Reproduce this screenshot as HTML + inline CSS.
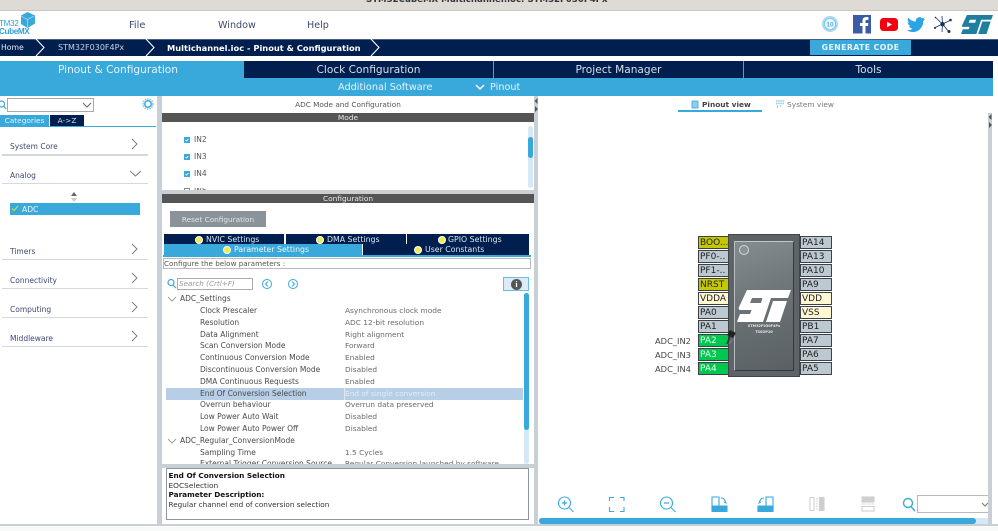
<!DOCTYPE html>
<html><head><meta charset="utf-8"><style>
html,body{margin:0;padding:0;background:#fff}
#p{position:relative;width:998px;height:531px;overflow:hidden;background:#fff;font-family:"DejaVu Sans","Liberation Sans",sans-serif;color:#444;filter:blur(.3px)}
#p div,#p svg{position:absolute}
.t{white-space:nowrap;line-height:12px;height:12px}
.n{background:#001f4f}
.b{background:#39a9dc}
.g{background:#c8d0d6}
.lab{font-size:7.5px;color:#4a4a4a}
.val{font-size:7.4px;color:#6a6a6a}
.cat{font-size:7.5px;color:#3d4a72;left:10px}
.line{left:2px;width:146px;height:1px;background:#d2d8dc}
.pin{width:30px;height:11px;border:1px solid #3c4248;font-size:9px;line-height:13px;padding-left:1px;box-sizing:content-box;color:#222;background:#bcc9d0;overflow:hidden}
.r{width:29px}
.y{background:#c4c800}.c{background:#fff6d2}.gr{background:#00c84e;color:#eafff0}
.adc{font-size:8.3px;color:#444;left:655px}
.dot{width:6px;height:6px;border-radius:50%;background:#ecec50;border:.5px solid #fff}
.tb{color:#dbe6f2;font-size:7.8px;line-height:11px}
.hdr{left:162px;width:372px;height:9px;background:#555;color:#e8e8e8;font-size:7.4px;line-height:10px;text-align:center}
.cb{left:184px;width:6px;height:6px;background:#39a9dc}
.in{left:194px;font-size:7.5px;color:#555}
.nav{font-size:10.6px;color:#d6dfea;text-align:center;top:64px}
</style></head><body><div id="p">
<div style="left:0;top:0;width:998px;height:10px;background:#dedbd6"></div>
<div style="left:0;top:10px;width:998px;height:1px;background:#c9c6c1"></div>
<div class="t" style="left:366px;top:-6px;font-size:8.6px;color:#333;font-weight:bold">STM32CubeMX Multichannel.ioc: STM32F030F4Px</div>

<!-- logo -->
<div class="t" style="left:-1px;top:18px;font-size:8px;color:#2f9fd4;font-family:'Liberation Sans',sans-serif;letter-spacing:-.2px">TM32</div>
<div class="t" style="left:-1px;top:26px;font-size:8.2px;color:#2f9fd4;font-family:'Liberation Sans',sans-serif;font-weight:bold;letter-spacing:-.4px">CubeMX</div>
<svg style="left:20px;top:12px" width="15" height="16" viewBox="0 0 15 16"><path d="M7.500 0L15 3.500V11.500L7.500 16L1 12V3.500Z" fill="#39a9dc"/><path d="M1 4L7.500 7.500L14 4M7.500 7.500V15" stroke="#bfe3f5" stroke-width=".7" fill="none"/></svg>
<div class="t" style="left:129px;top:18px;font-size:9.800px;line-height:12px;color:#3f4a6d;margin-top:1.500px">File</div>
<div class="t" style="left:218px;top:18px;font-size:9.600px;color:#3f4a6d;margin-top:1.500px">Window</div>
<div class="t" style="left:307px;top:18px;font-size:9.600px;color:#3f4a6d;margin-top:1.500px">Help</div>

<!-- social icons -->
<svg style="left:821px;top:15px" width="18" height="18" viewBox="0 0 18 18"><circle cx="9" cy="9" r="8" fill="#a9d9f1"/><circle cx="9" cy="9" r="5.600" fill="#e9f6fc" stroke="#7cc4e8" stroke-width=".8"/><text x="9" y="11.500" font-size="6.500" font-weight="bold" text-anchor="middle" fill="#5ab0dc" font-family="Liberation Sans">10</text></svg>
<svg style="left:853px;top:15px" width="19" height="19" viewBox="0 0 19 19"><rect width="18" height="18.500" fill="#3b5ba5"/><path d="M12.500 18.500V11H15L15.400 8H12.500V6.300C12.500 5.400 12.800 4.900 14 4.900H15.500V2.200C15 2.100 14.200 2 13.300 2C11 2 9.500 3.400 9.500 5.800V8H7V11H9.500V18.500Z" fill="#fff"/></svg>
<svg style="left:880px;top:18px" width="18" height="13" viewBox="0 0 18 13"><rect width="18" height="13" rx="3.400" fill="#f2000f"/><path d="M7 3.800L12 6.500L7 9.200Z" fill="#fff"/></svg>
<svg style="left:907px;top:17px" width="18" height="15" viewBox="0 0 18 15"><path d="M18 1.800c-.7.3-1.400.5-2.100.6.8-.5 1.300-1.200 1.600-2-.7.4-1.500.7-2.300.9A3.700 3.700 0 0 0 8.900 4.600C5.900 4.500 3.200 3 1.300.8c-1 1.700-.5 3.900 1.100 4.900-.6 0-1.200-.2-1.700-.5 0 1.800 1.300 3.300 3 3.700-.5.100-1.100.2-1.700.1.500 1.500 1.900 2.500 3.500 2.600C3.900 12.800 2 13.400 0 13.200 1.700 14.300 3.600 15 5.700 15c6.900 0 10.700-5.700 10.500-10.900.7-.6 1.300-1.300 1.800-2.300z" fill="#2ba3e4"/></svg>
<svg style="left:933px;top:15px" width="20" height="19" viewBox="0 0 20 19"><g stroke="#16305f" stroke-width=".8"><path d="M9.500 9L2 2M9.500 9L9 1M9.500 9L18 5M9.500 9L16 17M9.500 9L1 13M9.500 9L9 17"/></g><circle cx="9.500" cy="9.200" r="2.200" fill="#16305f"/><g fill="#16305f"><circle cx="17.500" cy="5" r="1.300"/><circle cx="16" cy="16.500" r="1.500"/><circle cx="2" cy="13" r="1"/><circle cx="2.500" cy="2.500" r=".8"/></g></svg>
<svg style="left:961px;top:15px" width="32" height="19" viewBox="0 0 54 32"><path d="M10 0H54L51 8H34L26 32H18L25.500 8H15L13 13H25Q28 13 27 16L21 32H0L3 24H13L14.500 20H3Q1 20 2 17Z" fill="#1f7f9f"/><path d="M36 11H50L43 32H29Z" fill="#1f7f9f"/></svg>

<!-- breadcrumb -->
<div class="n" style="left:0;top:39px;width:998px;height:17px;border-top:1px solid #4a5d82;box-sizing:border-box"></div>
<div class="t" style="left:1px;top:42px;font-size:7.700px;color:#e4eaf2">Home</div>
<div class="t" style="left:58px;top:42px;font-size:8px;color:#c6d2e2">STM32F030F4Px</div>
<div class="t" style="left:167px;top:42px;font-size:8.300px;color:#fff;font-weight:bold">Multichannel.ioc - Pinout &amp; Configuration</div>
<svg style="left:30px;top:38px" width="360" height="18" viewBox="0 0 360 18"><g fill="none" stroke="#fff" stroke-width="1.100"><path d="M6 1L14 9.500L6 18"/><path d="M116 1L124 9.500L116 18"/><path d="M341 1L349 9.500L341 18"/></g></svg>
<div class="b" style="left:810px;top:40px;width:101px;height:15px;color:#e8f5fc;font-size:7.800px;font-weight:bold;text-align:center;line-height:15px;letter-spacing:.4px">GENERATE CODE</div>

<!-- tabs -->
<div class="b" style="left:0;top:61px;width:993px;height:35px"></div>
<div class="n" style="left:244px;top:61px;width:249px;height:17px"></div>
<div class="n" style="left:494px;top:61px;width:249px;height:17px"></div>
<div class="n" style="left:744px;top:61px;width:249px;height:17px"></div>
<div class="t nav" style="left:0;width:236px;color:#e4f3fb">Pinout &amp; Configuration</div>
<div class="t nav" style="left:244px;width:249px">Clock Configuration</div>
<div class="t nav" style="left:494px;width:249px">Project Manager</div>
<div class="t nav" style="left:744px;width:249px">Tools</div>
<div class="t" style="left:338px;top:82px;font-size:9.700px;color:#e4f3fb">Additional Software</div>
<svg style="left:475px;top:84px" width="10" height="7" viewBox="0 0 10 7"><path d="M1 1L5 5L9 1" fill="none" stroke="#fff" stroke-width="1.500"/></svg>
<div class="t" style="left:490px;top:82px;font-size:9.700px;color:#e4f3fb">Pinout</div>

<!-- splitters -->
<div class="g" style="left:157px;top:96px;width:5px;height:428px"></div>
<div class="g" style="left:534px;top:96px;width:4px;height:428px"></div>
<div class="g" style="left:0;top:524px;width:998px;height:2px"></div>
<div style="left:0;top:526px;width:998px;height:5px;background:#f8f9f9"></div>
<div class="g" style="left:988px;top:113px;width:4px;height:411px"></div>
<svg style="left:534px;top:97px" width="5" height="16" viewBox="0 0 5 16"><path d="M3.500 1L.5 4L3.500 7ZM1 9L4 12L1 15Z" fill="#555"/></svg>
<svg style="left:988px;top:113px" width="5" height="16" viewBox="0 0 5 16"><path d="M3.500 1L.5 4L3.500 7ZM1 9L4 12L1 15Z" fill="#555"/></svg>

<!-- left panel -->
<svg style="left:0;top:100px" width="7" height="10" viewBox="0 0 7 10"><circle cx="1.500" cy="4" r="3" fill="none" stroke="#39a9dc" stroke-width="1.200"/><path d="M3.500 6L6 9" stroke="#39a9dc" stroke-width="1.200"/></svg>
<div style="left:7px;top:98px;width:87px;height:14px;border:1px solid #a9a9a9;box-sizing:border-box;background:#fff"></div>
<svg style="left:82px;top:102px" width="10" height="6" viewBox="0 0 10 6"><path d="M1 1L5 5L9 1" fill="none" stroke="#666"/></svg>
<svg style="left:142px;top:98px" width="12" height="12" viewBox="0 0 12 12"><circle cx="6" cy="6" r="3.200" fill="none" stroke="#39a9dc" stroke-width="1.500"/><circle cx="6" cy="6" r="5" fill="none" stroke="#7cc4e8" stroke-width="1.500" stroke-dasharray="1.500 1"/></svg>
<div class="b t" style="left:0;top:115px;width:49px;height:11px;color:#e4f3fb;font-size:7.400px;line-height:11px;text-align:center">Categories</div>
<div class="n t" style="left:50px;top:115px;width:34px;height:11px;color:#d6dfea;font-size:7.400px;line-height:11px;text-align:center">A-&gt;Z</div>
<div class="b" style="left:0;top:126px;width:156px;height:1px"></div>

<div class="t cat" style="top:140.500px">System Core</div><div class="line" style="top:154px;height:2px"></div>
<div class="t cat" style="top:169.500px">Analog</div><div class="line" style="top:183px"></div>
<div class="t cat" style="top:245.500px">Timers</div><div class="line" style="top:259px"></div>
<div class="t cat" style="top:274.500px">Connectivity</div><div class="line" style="top:288px"></div>
<div class="t cat" style="top:303.500px">Computing</div><div class="line" style="top:317px"></div>
<div class="t cat" style="top:332.500px">Middleware</div><div class="line" style="top:346px"></div>
<svg style="left:130px;top:138px" width="12" height="205" viewBox="0 0 12 205"><g fill="none" stroke="#777" stroke-width=".9"><path d="M2 1L7 6L2 11"/><path d="M0 33L5.500 38L11 33"/><path d="M2 106L7 111L2 116"/><path d="M2 135L7 140L2 145"/><path d="M2 164L7 169L2 174"/><path d="M2 193L7 198L2 203"/></g></svg>
<svg style="left:70px;top:192px" width="8" height="11" viewBox="0 0 8 11"><path d="M4 0L7 4H1Z" fill="#666"/><path d="M4 10L7 6H1Z" fill="#ccc"/></svg>
<div class="b" style="left:10px;top:203px;width:130px;height:12px"></div>
<svg style="left:11px;top:205px" width="8" height="7" viewBox="0 0 8 7"><path d="M1 3.500L3 5.500L7 1" fill="none" stroke="#c6dc2c" stroke-width="1.200"/></svg>
<div class="t" style="left:22px;top:203.500px;font-size:7.600px;color:#eef8fd">ADC</div>

<!-- middle -->
<div class="t" style="left:162px;width:372px;top:99px;text-align:center;font-size:7.300px;color:#555">ADC Mode and Configuration</div>
<div class="hdr" style="top:113px">Mode</div>
<div style="left:528px;top:126px;width:5px;height:62px;background:#d4e8f5;border-radius:3px"></div>
<div class="b" style="left:528px;top:137px;width:5px;height:21px;border-radius:3px"></div>
<svg style="left:184px;top:137px" width="6" height="40" viewBox="0 0 6 40"><g fill="#39a9dc"><rect width="6" height="6"/><rect y="17" width="6" height="6"/><rect y="34" width="6" height="6"/></g><path d="M1.500 3L2.500 4L4.500 2M1.500 20L2.500 21L4.500 19M1.500 37L2.500 38L4.500 36" stroke="#fff" stroke-width=".8" fill="none"/></svg>
<div class="t in" style="top:134px">IN2</div>
<div class="t in" style="top:151px">IN3</div>
<div class="t in" style="top:168px">IN4</div>
<div style="left:162px;top:188px;width:372px;height:2px;overflow:hidden;background:#fff"><div class="t in" style="left:32px;top:-3px">IN5</div><div style="left:22px;top:0;width:6px;height:6px;border:1px solid #888;box-sizing:border-box"></div></div>
<div class="g" style="left:162px;top:190px;width:372px;height:4px"></div>
<div class="hdr" style="top:194px">Configuration</div>
<div style="left:170px;top:211px;width:96px;height:16px;background:#8a939a;color:#e4e6e8;font-size:7.300px;line-height:17px;text-align:center">Reset Configuration</div>

<div class="n" style="left:164px;top:234px;width:120px;height:10px"></div>
<div class="n" style="left:286px;top:234px;width:120px;height:10px"></div>
<div class="n" style="left:407px;top:234px;width:122px;height:10px"></div>
<div class="b" style="left:164px;top:244px;width:198px;height:11px"></div>
<div class="n" style="left:363px;top:244px;width:166px;height:11px"></div>
<div class="t tb" style="left:206px;top:234px">NVIC Settings</div>
<div class="t tb" style="left:327px;top:234px">DMA Settings</div>
<div class="t tb" style="left:448px;top:234px">GPIO Settings</div>
<div class="t tb" style="left:234px;top:244px;color:#eef8fd">Parameter Settings</div>
<div class="t tb" style="left:425px;top:244px">User Constants</div>
<div class="dot" style="left:195px;top:236px"></div><div class="dot" style="left:316px;top:236px"></div><div class="dot" style="left:438px;top:236px"></div><div class="dot" style="left:223px;top:246px"></div><div class="dot" style="left:414px;top:246px"></div>
<div class="b" style="left:163px;top:255px;width:368px;height:2px"></div>
<div class="t" style="left:163px;top:258px;width:368px;height:11px;border:1px solid #bbb;box-sizing:border-box;font-size:7.200px;line-height:10px;color:#555;background:#fff">Configure the below parameters :</div>

<svg style="left:167px;top:278px" width="10" height="11" viewBox="0 0 10 11"><circle cx="4" cy="4.500" r="3" fill="none" stroke="#39a9dc" stroke-width="1.200"/><path d="M6 7L9 10" stroke="#39a9dc" stroke-width="1.200"/></svg>
<div style="left:177px;top:278px;width:76px;height:12px;border:1px solid #aaa;box-sizing:border-box;font-size:7.200px;line-height:10px;color:#999;font-style:italic;padding-left:1px;white-space:nowrap">Search (Crtl+F)</div>
<svg style="left:261px;top:278px" width="48" height="12" viewBox="0 0 48 12"><g fill="none" stroke="#39a9dc"><circle cx="6" cy="6" r="4.500"/><path d="M7 3.500L4.500 6L7 8.500"/><circle cx="32" cy="6" r="4.500"/><path d="M31 3.500L33.500 6L31 8.500"/></g></svg>
<div style="left:503px;top:277px;width:26px;height:14px;background:#dcebf5;border:1px solid #6cbce6;box-sizing:border-box"></div>
<div style="left:511px;top:279px;width:11px;height:11px;border-radius:50%;background:#555;color:#fff;font:bold 8px/11px 'Liberation Serif',serif;text-align:center">i</div>

<!-- tree -->
<div style="left:166px;top:388px;width:357px;height:11.500px;background:#b6cee6"></div>
<div style="left:344px;top:388px;width:1px;height:11.500px;background:#dfe9f3"></div>
<svg style="left:167px;top:296px" width="12" height="150" viewBox="0 0 12 150"><g fill="none" stroke="#888" stroke-width=".8"><path d="M1 1L5 5L9 1"/><path d="M1 143L5 147L9 143"/></g></svg>
<div class="t lab" style="left:180px;top:292.800px">ADC_Settings</div>
<div class="t lab" style="left:200px;top:305px">Clock Prescaler</div><div class="t val" style="left:345px;top:305px">Asynchronous clock mode</div>
<div class="t lab" style="left:200px;top:316.800px">Resolution</div><div class="t val" style="left:345px;top:316.800px">ADC 12-bit resolution</div>
<div class="t lab" style="left:200px;top:328.600px">Data Alignment</div><div class="t val" style="left:345px;top:328.600px">Right alignment</div>
<div class="t lab" style="left:200px;top:340.400px">Scan Conversion Mode</div><div class="t val" style="left:345px;top:340.400px">Forward</div>
<div class="t lab" style="left:200px;top:352.200px">Continuous Conversion Mode</div><div class="t val" style="left:345px;top:352.200px">Enabled</div>
<div class="t lab" style="left:200px;top:364px">Discontinuous Conversion Mode</div><div class="t val" style="left:345px;top:364px">Disabled</div>
<div class="t lab" style="left:200px;top:375.800px">DMA Continuous Requests</div><div class="t val" style="left:345px;top:375.800px">Enabled</div>
<div class="t lab" style="left:200px;top:387.600px">End Of Conversion Selection</div><div class="t val" style="left:345px;top:387.600px;color:#e4edf6">End of single conversion</div>
<div class="t lab" style="left:200px;top:399.400px">Overrun behaviour</div><div class="t val" style="left:345px;top:399.400px">Overrun data preserved</div>
<div class="t lab" style="left:200px;top:411.200px">Low Power Auto Wait</div><div class="t val" style="left:345px;top:411.200px">Disabled</div>
<div class="t lab" style="left:200px;top:423px">Low Power Auto Power Off</div><div class="t val" style="left:345px;top:423px">Disabled</div>
<div class="t lab" style="left:180px;top:434.800px">ADC_Regular_ConversionMode</div>
<div class="t lab" style="left:200px;top:446.600px">Sampling Time</div><div class="t val" style="left:345px;top:446.600px">1.5 Cycles</div>
<div class="t lab" style="left:200px;top:458.400px">External Trigger Conversion Source</div><div class="t val" style="left:345px;top:458.400px">Regular Conversion launched by software</div>
<div style="left:524px;top:293px;width:5px;height:171px;background:#d4e8f5;border-radius:3px"></div>
<div class="b" style="left:524px;top:293px;width:5px;height:137px;border-radius:3px"></div>
<div class="g" style="left:162px;top:464px;width:372px;height:4px"></div>
<div style="left:162px;top:468px;width:372px;height:56px;background:#fff"></div>
<div style="left:166px;top:468px;width:363px;height:52px;border:1px solid #8e979d;box-sizing:border-box;background:#fff"></div>
<div class="t" style="left:168.500px;top:470px;font-size:7.300px;color:#111;font-weight:bold">End Of Conversion Selection</div>
<div class="t" style="left:168.500px;top:479.500px;font-size:7.400px;color:#333">EOCSelection</div>
<div class="t" style="left:168.500px;top:489px;font-size:7.300px;color:#111;font-weight:bold">Parameter Description:</div>
<div class="t" style="left:168.500px;top:499px;font-size:7.250px;color:#333">Regular channel end of conversion selection</div>

<!-- right head -->
<svg style="left:691px;top:100px" width="8" height="9" viewBox="0 0 8 9"><rect x="1" y="1" width="6" height="7" fill="#8ecdee" stroke="#39a9dc" stroke-width=".8"/></svg>
<div class="t" style="left:702px;top:99px;font-size:7.400px;color:#444;font-weight:bold">Pinout view</div>
<div class="b" style="left:678px;top:110px;width:84px;height:1.500px"></div>
<svg style="left:776px;top:100px" width="8" height="8" viewBox="0 0 8 8"><path d="M0 1H8M0 3.500H8M1 6H2M4 6H5M1 7.500H2" stroke="#8ecdee" stroke-width="1.500" stroke-dasharray="1.500 .7"/></svg>
<div class="t" style="left:787px;top:99px;font-size:7.400px;color:#777">System view</div>

<!-- chip pins -->
<div class="pin y" style="left:698px;top:236px">BOO...</div>
<div class="pin" style="left:698px;top:250px">PF0-..</div>
<div class="pin" style="left:698px;top:264px">PF1-..</div>
<div class="pin y" style="left:698px;top:278px">NRST</div>
<div class="pin c" style="left:698px;top:292px">VDDA</div>
<div class="pin" style="left:698px;top:306px">PA0</div>
<div class="pin" style="left:698px;top:320px">PA1</div>
<div class="pin gr" style="left:698px;top:334px">PA2</div>
<div class="pin gr" style="left:698px;top:348px">PA3</div>
<div class="pin gr" style="left:698px;top:362px">PA4</div>
<div class="pin r" style="left:800px;top:236px">PA14</div>
<div class="pin r" style="left:800px;top:250px">PA13</div>
<div class="pin r" style="left:800px;top:264px">PA10</div>
<div class="pin r" style="left:800px;top:278px">PA9</div>
<div class="pin r c" style="left:800px;top:292px">VDD</div>
<div class="pin r c" style="left:800px;top:306px">VSS</div>
<div class="pin r" style="left:800px;top:320px">PB1</div>
<div class="pin r" style="left:800px;top:334px">PA7</div>
<div class="pin r" style="left:800px;top:348px">PA6</div>
<div class="pin r" style="left:800px;top:362px">PA5</div>
<div class="t adc" style="top:335px">ADC_IN2</div>
<div class="t adc" style="top:349px">ADC_IN3</div>
<div class="t adc" style="top:363px">ADC_IN4</div>

<!-- chip body -->
<div style="left:728px;top:234px;width:72px;height:143px;background:#5d6367;border:1px solid #3f4549;box-sizing:border-box"></div>
<div style="left:734px;top:241px;width:60px;height:130px;background:linear-gradient(160deg,#858c8f 0%,#686f73 55%,#5a6064 100%);border-top:1px solid #c0c5c7;border-left:1px solid #b8bdc0;border-right:1px solid #34393c;border-bottom:1px solid #34393c;box-sizing:border-box"></div>
<div style="left:739px;top:245px;width:10px;height:10px;border-radius:50%;background:#8b9296;border:1px solid #d3d7d9;box-sizing:border-box"></div>
<svg style="left:737px;top:290px" width="54" height="32" viewBox="0 0 54 32"><path d="M10 0H54L51 8H34L26 32H18L25.500 8H15L13 13H25Q28 13 27 16L21 32H0L3 24H13L14.500 20H3Q1 20 2 17Z" fill="#fff"/><path d="M36 11H50L43 32H29Z" fill="#fff"/></svg>
<div class="t" style="left:728px;width:72px;text-align:center;top:320px;font-size:3.500px;color:#e6e8ea;font-weight:bold">STM32F030F4Px</div>
<div class="t" style="left:728px;width:72px;text-align:center;top:326px;font-size:3.500px;color:#e6e8ea;font-weight:bold">TSSOP20</div>
<svg style="left:723px;top:329px" width="14" height="18" viewBox="0 0 14 18"><path d="M4 15L7 7" stroke="#333" stroke-width="1.500"/><path d="M7 1L13 4L10 9L4 6Z" fill="#222"/><path d="M6 15L10 10" stroke="#888" stroke-width="2" opacity=".5"/></svg>

<!-- bottom tools -->
<svg style="left:556px;top:495px" width="400" height="22" viewBox="0 0 400 22" fill="none" stroke="#39a9dc" stroke-width="1.100">
<circle cx="8.500" cy="8" r="6"/><path d="M13 12.500L17.500 17" stroke-width="1"/><path d="M6 8H11M8.500 5.500V10.500" stroke-width="1.200"/>
<path d="M53.500 6V2.500H58M64 2.500H68V6M68 12V16.500H64M58 16.500H53.500V12"/>
<circle cx="110.500" cy="8" r="6"/><path d="M115 12.500L119.500 17" stroke-width="1"/><path d="M108 8H113" stroke-width="1.200"/>
<path d="M156 15V2H163V11H156"/><path d="M156 11H171V16.500H156Z" fill="#39a9dc"/><path d="M165 3C168 3 169 5 170 8L168 7" stroke-width="1"/>
<path d="M217 15V2H210V11H217"/><path d="M202 11H217V16.500H202Z" fill="#39a9dc"/><path d="M208 3C205 3 204 5 203 8L205 7" stroke-width="1"/>
<g stroke="#cfcfcf"><rect x="254" y="2.500" width="4" height="13"/><path d="M261 3V15" stroke-dasharray="1.500 1"/><rect x="263.500" y="2.500" width="4.500" height="13" fill="#cfcfcf"/></g>
<g stroke="#cfcfcf"><rect x="306" y="2" width="12" height="5" fill="#cfcfcf"/><path d="M306 9H318" stroke-dasharray="1.500 1"/><rect x="306" y="11.500" width="12" height="4.500"/></g>
<circle cx="352" cy="8" r="4.500" stroke-width="1.400"/><path d="M355 11.500L359 16" stroke-width="1.400"/>
</svg>
<div style="left:917px;top:495px;width:71px;height:18px;border:1px solid #bbb;border-right:0;box-sizing:border-box;background:#fff"></div>
<svg style="left:981px;top:502px" width="8" height="5" viewBox="0 0 8 5"><path d="M1 1L4 4L7 1" fill="none" stroke="#777"/></svg>
<div style="left:539px;top:518px;width:449px;height:6px;background:#d4e8f5"></div>
<div class="b" style="left:539px;top:518px;width:437px;height:6px;border-radius:3px"></div>
</div></body></html>
